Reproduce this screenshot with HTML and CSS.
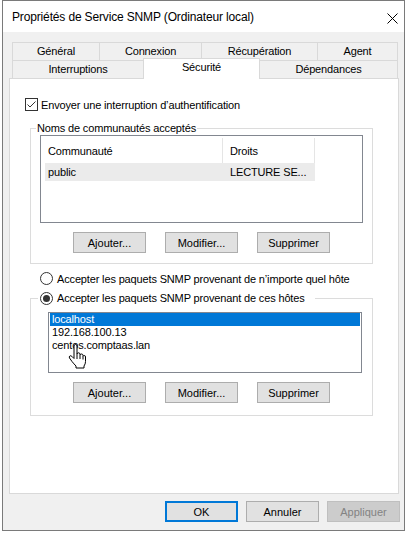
FILE: index.html
```html
<!DOCTYPE html>
<html lang="fr">
<head>
    <meta charset="UTF-8">
    <title>Propriétés de Service SNMP (Ordinateur local)</title>
    <link rel="stylesheet" href="styles.css">
</head>
<body>
    <div class="dialog">
        <div class="titlebar">
            <span class="title">Propriétés de Service SNMP (Ordinateur local)</span>
            <svg class="close" width="11" height="11" viewBox="0 0 11 11">
                <path d="M0.5 0.5 L10.5 10.5 M10.5 0.5 L0.5 10.5" stroke="#000" stroke-width="1" fill="none"/>
            </svg>
        </div>
        <div class="content">
            <div class="tabs">
                <div class="tab-row">
                    <div class="tab tab-general">Général</div>
                    <div class="tab tab-connexion">Connexion</div>
                    <div class="tab tab-recup">Récupération</div>
                    <div class="tab tab-agent">Agent</div>
                </div>
                <div class="tab-row">
                    <div class="tab tab-interrupt">Interruptions</div>
                    <div class="tab tab-securite active">Sécurité</div>
                    <div class="tab tab-depend">Dépendances</div>
                </div>
            </div>
            <div class="panel">
                <div class="check-row">
                    <span class="checkbox">
                        <svg width="11" height="11" viewBox="0 0 11 11">
                            <polyline points="1.5,5.5 4,8 9.5,2.5" fill="none" stroke="#333" stroke-width="1"/>
                        </svg>
                    </span>
                    Envoyer une interruption d’authentification
                </div>

                <fieldset class="group group-communities">
                    <legend>Noms de communautés acceptés</legend>
                    <div class="listview">
                        <div class="lv-header">
                            <div class="col col-name">Communauté</div>
                            <div class="col col-rights">Droits</div>
                        </div>
                        <div class="lv-row selected">
                            <div class="col col-name">public</div>
                            <div class="col col-rights">LECTURE SE...</div>
                        </div>
                    </div>
                    <div class="btn-row">
                        <button class="btn">Ajouter...</button>
                        <button class="btn">Modifier...</button>
                        <button class="btn">Supprimer</button>
                    </div>
                </fieldset>

                <div class="radio-row">
                    <span class="radio"></span>
                    Accepter les paquets SNMP provenant de n’importe quel hôte
                </div>

                <fieldset class="group group-hosts">
                    <legend><span class="radio checked"></span>Accepter les paquets SNMP provenant de ces hôtes</legend>
                    <div class="hostlist">
                        <div class="host selected">localhost</div>
                        <div class="host">192.168.100.13</div>
                        <div class="host">centos.comptaas.lan</div>
                        <!-- mouse pointer sitting over the list -->
                        <svg class="cursor" width="19" height="25" viewBox="0 0 19 25">
                            <path d="M6 2 Q6 0.5 7.5 0.5 Q9 0.5 9 2 V10 Q9.2 8.8 10.5 8.8 Q12 8.8 12 10.3 V11 Q12.3 10 13.5 10 Q15 10 15 11.5 V12.3 Q15.3 11.5 16.3 11.5 Q17.5 11.5 17.5 13 V17.5 Q17.5 20 16 22 V24 H8 V22 Q6 20 4 17.5 L1.5 14 Q0.8 12.8 1.8 12 Q2.8 11.3 3.8 12.3 L6 14.5 Z" fill="#fff" stroke="#000" stroke-width="1"/>
                            <path d="M9 10 V15 M12 11 V15 M15 12.3 V15.5" stroke="#000" stroke-width="1" fill="none"/>
                        </svg>
                    </div>
                    <div class="btn-row">
                        <button class="btn">Ajouter...</button>
                        <button class="btn">Modifier...</button>
                        <button class="btn">Supprimer</button>
                    </div>
                </fieldset>
            </div>
            <div class="footer">
                <button class="btn btn-default">OK</button>
                <button class="btn">Annuler</button>
                <button class="btn btn-disabled">Appliquer</button>
            </div>
        </div>
    </div>
</body>
</html>
```

FILE: styles.css
```css
* {
    box-sizing: border-box;
}
body {
    margin: 0;
    background: #fff;
    font-family: "Liberation Sans", Arial, sans-serif;
    font-size: 11px;
    letter-spacing: -0.15px;
    color: #000;
}
.dialog {
    width: 403px;
    height: 531px;
    margin-left: 2px;
    border: 1px solid #7a7a7a;
    background: #f0f0f0;
    display: flex;
    flex-direction: column;
}
.titlebar {
    height: 31px;
    background: #fff;
    display: flex;
    align-items: center;
    justify-content: space-between;
    padding: 0 6px 0 9px;
    font-size: 12px;
}
.close {
    margin-top: 3px;
}
.content {
    flex: 1;
    display: flex;
    flex-direction: column;
    padding: 10px 5px 0 6px;
}
.tabs {
    padding: 0 1px 0 3px;
}
.tab-row {
    display: flex;
}
.tab {
    height: 18px;
    line-height: 17px;
    border: 1px solid #d9d9d9;
    border-bottom: none;
    background: #f0f0f0;
    text-align: center;
    white-space: nowrap;
}
.tab + .tab {
    margin-left: -1px;
}
.tab-general { width: 88px; }
.tab-connexion { width: 103px; }
.tab-recup { width: 117px; }
.tab-agent { width: 81px; }
.tab-interrupt { width: 132px; }
.tab-securite { width: 117px; }
.tab-depend { width: 139px; }
.tab.active {
    position: relative;
    z-index: 2;
    background: #fff;
    height: 21px;
    margin-top: -2px;
    margin-bottom: -1px;
}
.panel {
    height: 416px;
    background: #fff;
    border: 1px solid #d9d9d9;
}
.check-row {
    display: flex;
    align-items: center;
    height: 13px;
    margin: 19px 0 0 15px;
}
.checkbox {
    width: 13px;
    height: 13px;
    border: 1px solid #333;
    background: #fff;
    margin-right: 3px;
    display: flex;
}
.group {
    border: 1px solid #dcdcdc;
    margin: 0;
    padding: 0;
    min-width: 0;
}
.group legend {
    line-height: 14px;
    height: 14px;
    padding: 0 1px;
    margin-left: 5px;
}
.group-communities {
    margin: 10px 25px 0 20px;
    padding-bottom: 10px;
}
.listview {
    margin: 0 9px;
    height: 88px;
    border: 1px solid #828790;
    background: #fff;
    padding-left: 4px;
}
.lv-header {
    display: flex;
    height: 27px;
}
.lv-header .col {
    margin-top: 2px;
    height: 25px;
    line-height: 26px;
    border-right: 1px solid #e5e5e5;
}
.col-name {
    width: 178px;
    padding-left: 3px;
}
.col-rights {
    width: 92px;
    padding-left: 7px;
}
.lv-row {
    display: flex;
    height: 18px;
    line-height: 18px;
}
.lv-row.selected {
    width: 270px;
    background: #ebebeb;
}
.btn-row {
    display: flex;
    justify-content: center;
    gap: 19px;
    margin-top: 9px;
}
.btn {
    width: 73px;
    height: 21px;
    padding: 0;
    background: #e1e1e1;
    border: 1px solid #adadad;
    font: inherit;
    color: #000;
}
.btn-default {
    border: 2px solid #0078d7;
}
.btn-disabled {
    background: #cccccc;
    border-color: #bfbfbf;
    color: #838383;
}
.radio-row {
    display: flex;
    align-items: center;
    height: 13px;
    margin: 8px 0 0 30px;
}
.radio {
    width: 13px;
    height: 13px;
    border: 1px solid #333;
    border-radius: 50%;
    background: #fff;
    margin-right: 4px;
    display: flex;
    align-items: center;
    justify-content: center;
    flex-shrink: 0;
}
.radio.checked::after {
    content: "";
    width: 7px;
    height: 7px;
    border-radius: 50%;
    background: #333;
}
.group-hosts {
    margin: 6px 25px 0 20px;
    padding-bottom: 12px;
}
.group-hosts legend {
    display: flex;
    align-items: center;
    margin-left: 7px;
    padding: 0 10px 0 2px;
}
.hostlist {
    position: relative;
    margin: 7px 10px 0 17px;
    height: 61px;
    border: 1px solid #828790;
    background: #fff;
    padding: 0 1px;
}
.host {
    height: 13px;
    line-height: 13px;
    padding-left: 2px;
}
.host.selected {
    background: #0078d7;
    color: #fff;
}
.cursor {
    position: absolute;
    left: 19px;
    top: 31px;
}
.footer {
    display: flex;
    justify-content: flex-end;
    gap: 8px;
    margin: 7px -1px 0 0;
}
```
